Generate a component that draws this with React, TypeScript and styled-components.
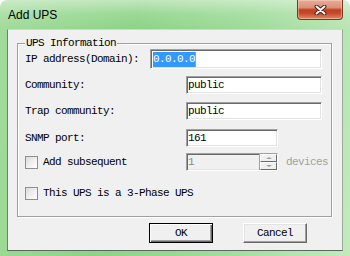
import React from "react";
import styled, { createGlobalStyle } from "styled-components";

const Global = createGlobalStyle`
  html, body { margin: 0; padding: 0; width: 350px; height: 256px; overflow: hidden; background: #fff; }
  #root { width: 350px; height: 256px; }
`;

const SIM = `"Liberation Mono", "DejaVu Sans Mono", monospace`;

const Window = styled.div`
  box-sizing: border-box;
  width: 350px;
  height: 256px;
  display: flex;
  flex-direction: column;
  padding: 0 7px 5px 7px;
  border-radius: 7px 7px 0 0;
  background:
    linear-gradient(to bottom, rgba(255,255,255,0.45) 0px, rgba(255,255,255,0.12) 14px, rgba(255,255,255,0) 29px),
    linear-gradient(100deg, #a2dc9c 0%, #8dd387 35%, #9fdb99 65%, #c3eabf 100%);
`;

const TitleBar = styled.div`
  height: 29px;
  flex: none;
  display: flex;
  align-items: flex-start;
`;

const Title = styled.div`
  margin: 8px 0 0 1px;
  font-family: "Liberation Sans", Arial, sans-serif;
  font-size: 12px;
  line-height: 15px;
  color: #000;
`;

const CloseButton = styled.div`
  margin-left: auto;
  box-sizing: border-box;
  width: 46px;
  height: 20px;
  border: 1px solid #7a3524;
  border-top: none;
  border-radius: 0 0 4px 4px;
  display: flex;
  align-items: center;
  justify-content: center;
  background: linear-gradient(to bottom, #e7ad9b 0%, #dc8f78 40%, #c2401f 52%, #c6492a 70%, #de8a66 100%);
  box-shadow: inset 0 0 0 1px rgba(255, 220, 200, 0.45);
`;

const Client = styled.div`
  flex: 1;
  display: flex;
  flex-direction: column;
  background: #f0f0f0;
  border: 1px solid;
  border-color: #cfd8cf #9aab9a #5a6a5a #6f7f6f;
  padding: 0 10px 0 9px;
`;

const GroupBox = styled.fieldset`
  margin: 7px 0 0 0;
  padding: 0 0 14px 7px;
  min-width: 0;
  border: 1px solid #a0a0a0;
  box-shadow: inset 1px 1px 0 #fff, 1px 1px 0 #fff;
  display: flex;
  flex-direction: column;
`;

const Legend = styled.legend`
  padding: 0 1px;
  margin: 0;
  background: #f0f0f0;
  font-family: ${SIM};
  font-size: 11px;
  line-height: 12px;
  letter-spacing: -0.6px;
  color: #000;
`;

const Row = styled.div<{ $top: number; $h: number }>`
  display: flex;
  align-items: center;
  height: ${(p) => p.$h}px;
  margin-top: ${(p) => p.$top}px;
`;

const Label = styled.span<{ $w: number; $muted?: boolean }>`
  width: ${(p) => p.$w}px;
  flex: none;
  display: flex;
  align-items: center;
  font-family: ${SIM};
  font-size: 11px;
  letter-spacing: -0.6px;
  white-space: nowrap;
  color: ${(p) => (p.$muted ? "#a0a0a0" : "#000")};
`;

const Text = styled.span<{ $muted?: boolean; $gap?: number }>`
  font-family: ${SIM};
  font-size: 11px;
  letter-spacing: -0.6px;
  white-space: nowrap;
  margin-left: ${(p) => p.$gap ?? 0}px;
  color: ${(p) => (p.$muted ? "#a0a0a0" : "#000")};
`;

const Field = styled.div<{ $w: number; $disabled?: boolean }>`
  box-sizing: border-box;
  width: ${(p) => p.$w}px;
  height: 100%;
  flex: none;
  display: flex;
  align-items: center;
  padding-left: 1px;
  border: 1px solid;
  border-color: #a0a0a0 #fff #fff #a0a0a0;
  box-shadow: inset 1px 1px 0 #696969, inset -1px -1px 0 #e3e3e3;
  background: ${(p) => (p.$disabled ? "#f0f0f0" : "#fff")};
  font-family: ${SIM};
  font-size: 11px;
  letter-spacing: -0.6px;
  color: ${(p) => (p.$disabled ? "#8a8a8a" : "#000")};
`;

const Selection = styled.span`
  margin-left: 1px;
  padding: 1px 0;
  background: #3399ff;
  color: #fff;
  border-right: 1px solid #ff8c1a;
  line-height: 13px;
`;

const Spinner = styled.div`
  margin-left: auto;
  width: 17px;
  height: 100%;
  display: flex;
  flex-direction: column;
  border-left: 1px solid #a0a0a0;
`;

const SpinHalf = styled.div<{ $down?: boolean }>`
  flex: 1;
  box-sizing: border-box;
  display: flex;
  align-items: center;
  justify-content: center;
  border: 1px solid;
  border-color: #fff #696969 #696969 #fff;
  background: #f0f0f0;
  &::after {
    content: "";
    width: 0;
    height: 0;
    border-left: 3px solid transparent;
    border-right: 3px solid transparent;
    ${(p) => (p.$down ? "border-top: 2px solid #a0a0a0;" : "border-bottom: 2px solid #a0a0a0;")}
  }
`;

const Check = styled.span`
  box-sizing: border-box;
  width: 13px;
  height: 13px;
  flex: none;
  margin-right: 5px;
  border: 1px solid #8e8f8f;
  background: linear-gradient(135deg, #dcdcdc 0%, #f6f6f6 70%, #fff 100%);
`;

const ButtonRow = styled.div`
  display: flex;
  gap: 30px;
  margin-top: 6px;
  padding-left: 132px;
`;

const Button = styled.button<{ $default?: boolean }>`
  box-sizing: border-box;
  width: 64px;
  height: 20px;
  padding: 0;
  background: #f0f0f0;
  border: 1px solid;
  border-color: ${(p) => (p.$default ? "#000" : "#fff #696969 #696969 #fff")};
  box-shadow: ${(p) =>
    p.$default
      ? "inset 1px 1px 0 #fff, inset -1px -1px 0 #696969, inset -2px -2px 0 #a0a0a0"
      : "inset -1px -1px 0 #a0a0a0, inset 1px 1px 0 #e3e3e3"};
  font-family: ${SIM};
  font-size: 11px;
  letter-spacing: -0.6px;
  color: #000;
`;

const CloseGlyph = () => (
  <svg width="13" height="10" viewBox="0 0 13 10">
    <path d="M2.5 1.5 L10.5 8.5 M10.5 1.5 L2.5 8.5" stroke="#4a1f14" strokeWidth="4" strokeLinecap="round" />
    <path d="M2.5 1.5 L10.5 8.5 M10.5 1.5 L2.5 8.5" stroke="#fff" strokeWidth="2" strokeLinecap="round" />
  </svg>
);

export default function App() {
  return (
    <>
      <Global />
      <Window>
        <TitleBar>
          <Title>Add UPS</Title>
          <CloseButton>
            <CloseGlyph />
          </CloseButton>
        </TitleBar>
        <Client>
          <GroupBox>
            <Legend>UPS Information</Legend>
            <Row $top={0} $h={20}>
              <Label $w={125}>IP address(Domain):</Label>
              <Field $w={172}>
                <Selection>0.0.0.0</Selection>
              </Field>
            </Row>
            <Row $top={7} $h={18}>
              <Label $w={161}>Community:</Label>
              <Field $w={136}>public</Field>
            </Row>
            <Row $top={8} $h={18}>
              <Label $w={161}>Trap community:</Label>
              <Field $w={136}>public</Field>
            </Row>
            <Row $top={9} $h={18}>
              <Label $w={161}>SNMP port:</Label>
              <Field $w={92}>161</Field>
            </Row>
            <Row $top={6} $h={18}>
              <Label $w={161}>
                <Check />
                Add subsequent
              </Label>
              <Field $w={92} $disabled>
                1
                <Spinner>
                  <SpinHalf />
                  <SpinHalf $down />
                </Spinner>
              </Field>
              <Text $muted $gap={8}>devices</Text>
            </Row>
            <Row $top={13} $h={18}>
              <Label $w={250}>
                <Check />
                This UPS is a 3-Phase UPS
              </Label>
            </Row>
          </GroupBox>
          <ButtonRow>
            <Button $default>OK</Button>
            <Button>Cancel</Button>
          </ButtonRow>
        </Client>
      </Window>
    </>
  );
}
